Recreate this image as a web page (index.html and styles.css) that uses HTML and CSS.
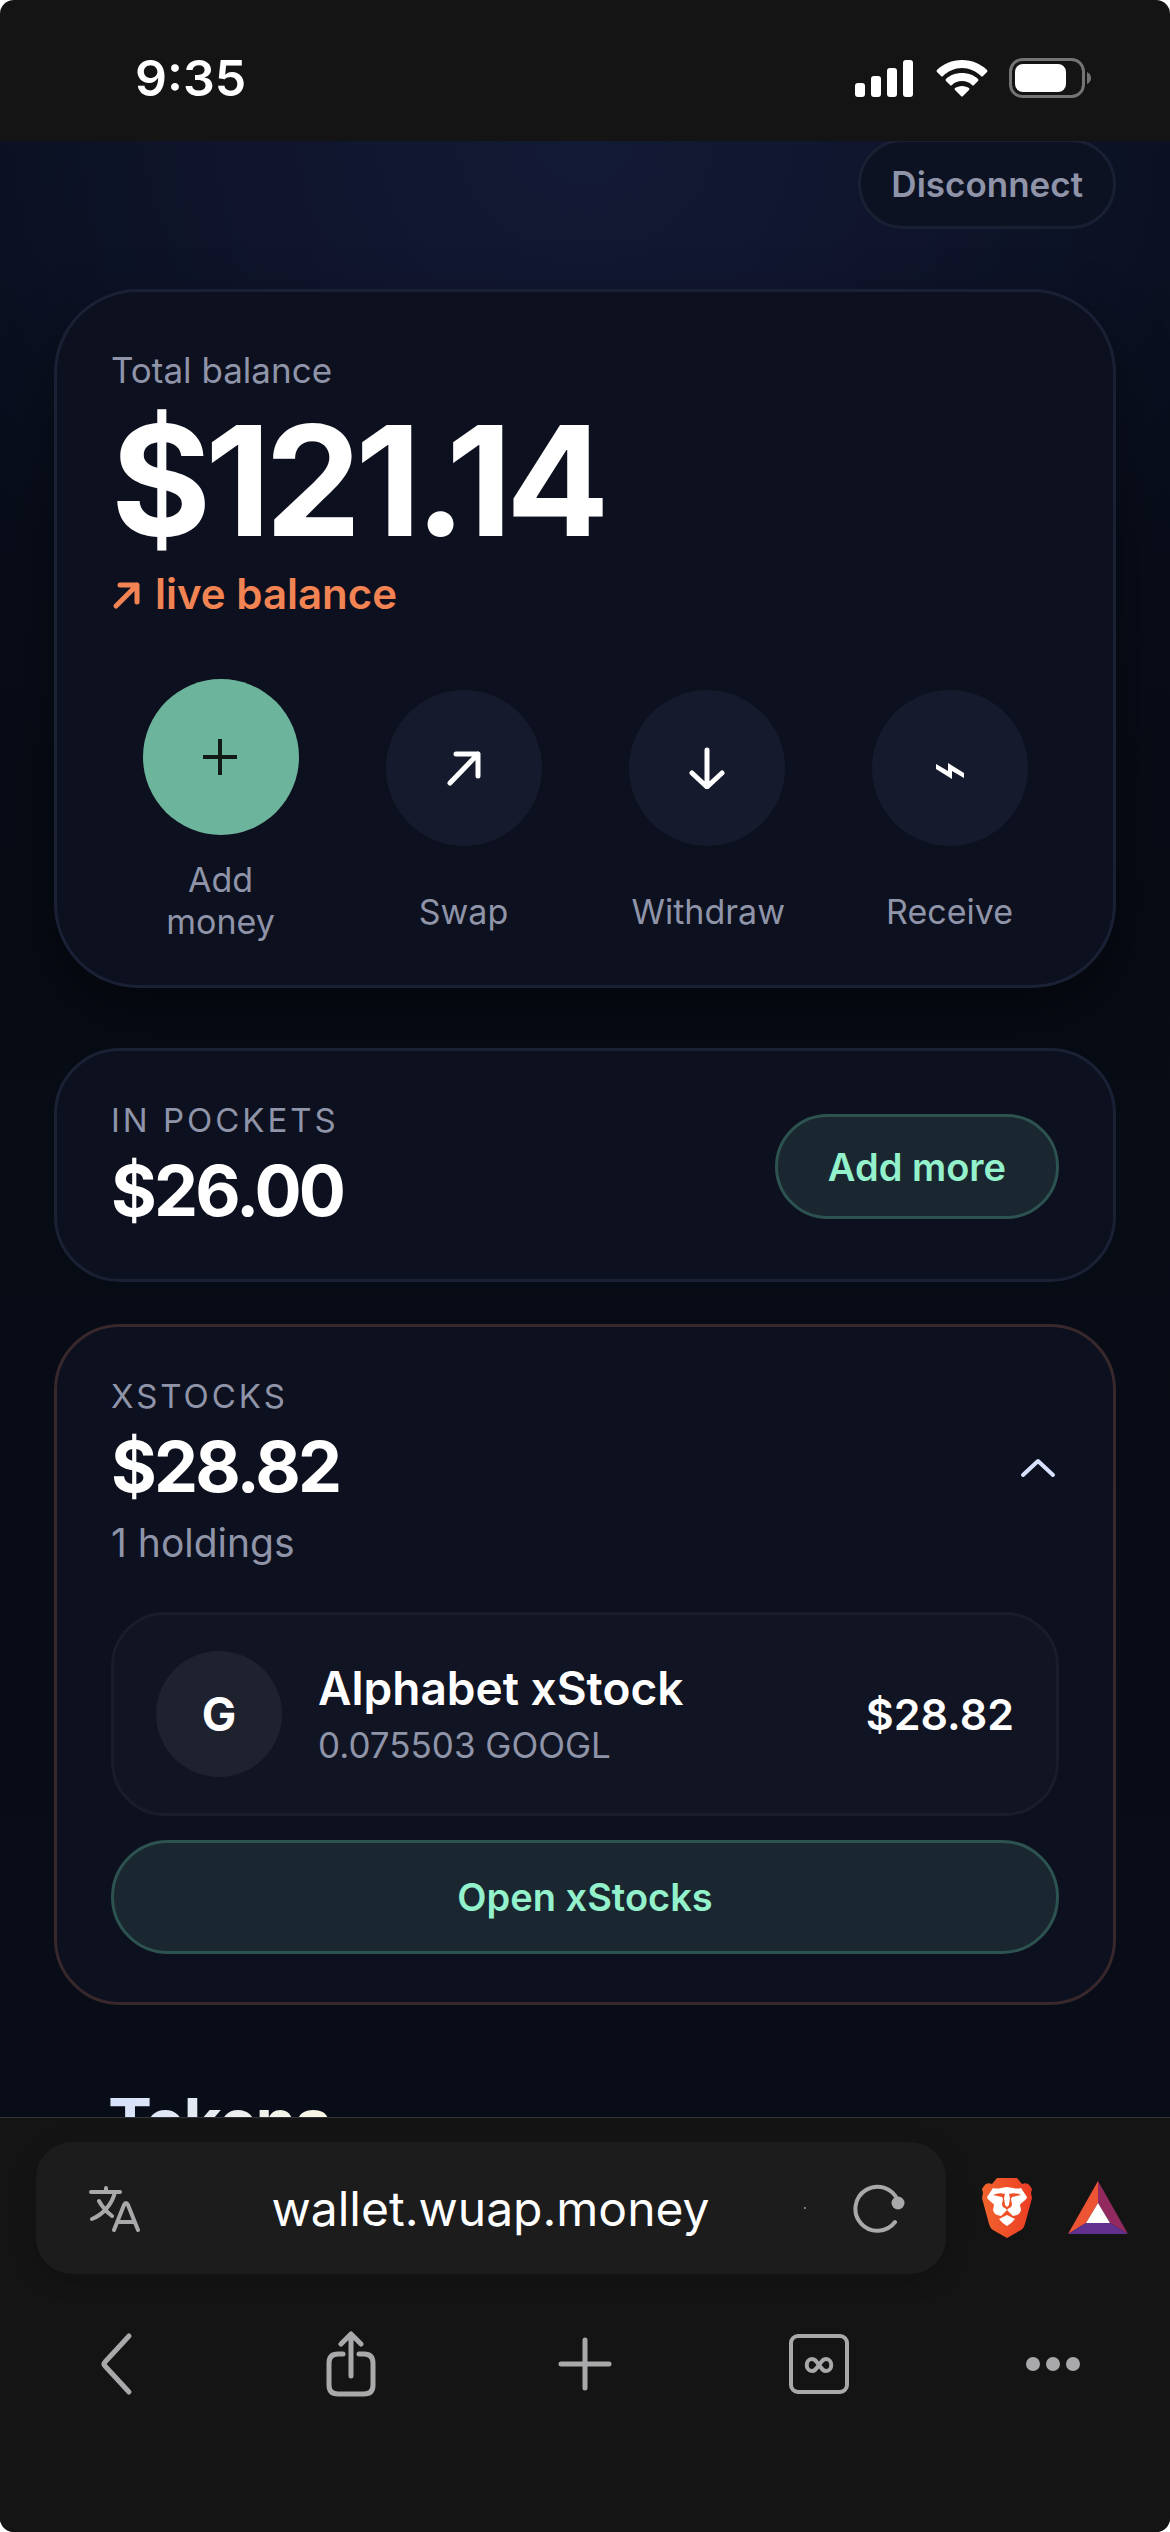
FILE: index.html
```
<!DOCTYPE html>
<html lang="en">
<head>
    <meta charset="UTF-8">
    <meta name="viewport" content="width=device-width, initial-scale=1.0">
    <title>Wuap Wallet</title>
    <link rel="stylesheet" href="styles.css">
</head>
<body>
    <div class="screen">
        <header class="status-bar">
            <span class="time">9:35</span>
            <div class="status-icons">
                <svg width="60" height="38" viewBox="0 0 60 38" fill="#fff">
                    <rect x="0" y="24" width="10" height="14" rx="3"/>
                    <rect x="16" y="17" width="10" height="21" rx="3"/>
                    <rect x="32" y="9" width="10" height="29" rx="3"/>
                    <rect x="48" y="1" width="10" height="37" rx="3"/>
                </svg>
                <svg width="52" height="38" viewBox="0 0 52 38" fill="#fff">
                    <path d="M26 1C16 1 7 5 1 11q-1 1 0 2l4 4q1 1 2 0C12 12 19 9 26 9s14 3 19 8q1 1 2 0l4-4q1-1 0-2C45 5 36 1 26 1z"/>
                    <path d="M26 14c-6 0-12 2-16 6q-1 1 0 2l4 4q1 1 2 0c3-3 6-4 10-4s7 1 10 4q1 1 2 0l4-4q1-1 0-2c-4-4-10-6-16-6z"/>
                    <path d="M26 27c-3 0-5 1-7 2q-1 1 0 2l6 6q1 1 2 0l6-6q1-1 0-2c-2-1-4-2-7-2z"/>
                </svg>
                <svg width="83" height="40" viewBox="0 0 83 40">
                    <rect x="1.500" y="1.500" width="73" height="37" rx="12" fill="none" stroke="#747474" stroke-width="3"/>
                    <rect x="6" y="6" width="51" height="28" rx="8" fill="#fff"/>
                    <path d="M78 14q4 2 4 6t-4 6z" fill="#747474"/>
                </svg>
            </div>
        </header>

        <main class="wallet">
            <div class="topbar">
                <button class="disconnect">Disconnect</button>
            </div>

            <section class="card balance">
                <p class="balance-label">Total balance</p>
                <p class="balance-total">$121.14</p>
                <p class="balance-live">
                    <svg width="32" height="32" viewBox="0 0 32 32" fill="none" stroke="currentColor" stroke-width="5" stroke-linecap="round" stroke-linejoin="round"><path d="M5 28L26 7M9 7h17v17"/></svg>
                    live balance
                </p>
                <div class="actions">
                    <button class="action primary">
                        <span class="action-icon"><svg width="36" height="36" viewBox="0 0 36 36" fill="none" stroke="currentColor" stroke-width="4"><path d="M17 0v36M0 18h34"/></svg></span>
                        <span class="action-label">Add money</span>
                    </button>
                    <button class="action">
                        <span class="action-icon"><svg width="36" height="38" viewBox="0 0 36 38" fill="none" stroke="currentColor" stroke-width="5" stroke-linecap="round" stroke-linejoin="round"><path d="M4 34L32 5M10 5h22v22"/></svg></span>
                        <span class="action-label">Swap</span>
                    </button>
                    <button class="action">
                        <span class="action-icon"><svg width="36" height="42" viewBox="0 0 36 42" fill="none" stroke="currentColor" stroke-width="5" stroke-linecap="round" stroke-linejoin="round"><path d="M18 3v36M3 26l15 14 15-14"/></svg></span>
                        <span class="action-label">Withdraw</span>
                    </button>
                    <button class="action">
                        <span class="action-icon"><svg width="28" height="24" viewBox="0 0 28 24" fill="currentColor"><path d="M0 8l12 7V7l16 10v5l-12-7v8L0 13z"/></svg></span>
                        <span class="action-label">Receive</span>
                    </button>
                </div>
            </section>

            <section class="card pockets">
                <div>
                    <h2 class="card-title">In pockets</h2>
                    <p class="card-amount">$26.00</p>
                </div>
                <button class="mint-button">Add more</button>
            </section>

            <section class="card stocks">
                <div class="stocks-head">
                    <div>
                        <h2 class="card-title">xStocks</h2>
                        <p class="card-amount">$28.82</p>
                        <p class="holdings">1 holdings</p>
                    </div>
                    <button class="collapse" aria-label="Collapse">
                        <svg width="42" height="30" viewBox="0 0 42 30" fill="none" stroke="currentColor" stroke-width="4" stroke-linecap="round" stroke-linejoin="round"><path d="M6 17L21 3l15 14"/></svg>
                    </button>
                </div>
                <div class="holding">
                    <span class="avatar">G</span>
                    <div class="holding-info">
                        <p class="holding-name">Alphabet xStock</p>
                        <p class="holding-units">0.075503 GOOGL</p>
                    </div>
                    <span class="holding-value">$28.82</span>
                </div>
                <button class="mint-button wide">Open xStocks</button>
            </section>

            <h2 class="tokens-title">Tokens</h2>
        </main>

        <footer class="browser">
            <div class="address-row">
                <div class="address-bar">
                    <button class="icon-button" aria-label="Translate">
                        <svg width="54" height="48" viewBox="0 0 54 48" fill="none" stroke="currentColor" stroke-width="4" stroke-linecap="round" stroke-linejoin="round"><path d="M4 8h29M19 4v4M28 8C25 21 15 31 5 35M12 17q5 9 13 15M27 46L37 21q2-4 4 0l10 25M31 38h16"/></svg>
                    </button>
                    <input class="url" type="text" aria-label="Address" value="wallet.wuap.money">
                    <span class="url-dot"></span>
                    <button class="icon-button" aria-label="Reload">
                        <svg width="54" height="50" viewBox="0 0 54 50" fill="none" stroke="currentColor" stroke-width="4" stroke-linecap="round"><path d="M42 39A22 22 0 1 1 45 18"/><circle cx="45" cy="20" r="6.500" fill="currentColor" stroke="none"/></svg>
                    </button>
                </div>
                <button class="icon-button" aria-label="Brave Shields">
                    <svg width="50" height="60" viewBox="0 0 50 60">
                        <defs><linearGradient id="brave"><stop offset="0" stop-color="#f1642d"/><stop offset="1" stop-color="#ec3c24"/></linearGradient></defs>
                        <path fill="url(#brave)" d="M15 0h20l5 6q6-2 8 2l2 3-1 4 1 5-7 26q-1 4-4 6L25 60 11 52q-3-2-4-6L0 20l1-5-1-4 2-3q2-4 8-2z"/>
                        <path fill="#fff" d="M11 10q4 1 8 0l6-1 6 1q4 1 8 0l6 9q0 2-3 4-4 3-4 4l1 5q-1 4-4 5l-4 1-6-6-6 6-4-1q-3-1-4-5l1-5q0-1-4-4-3-2-3-4z"/>
                        <path fill="#fff" d="M25 37l8 4q-3 4-8 7-5-3-8-7z"/>
                        <path fill="#ee5027" d="M11 17q6-3 12-1l-1 4 1 7 2 2 2-2 1-7-1-4q6-2 12 1l-9 2-1 2 1 5q0 3-3 4l-2 2-2-2q-3-1-3-4l1-5-1-2z"/>
                    </svg>
                </button>
                <button class="icon-button" aria-label="Rewards">
                    <svg width="60" height="54" viewBox="0 0 60 54">
                        <path fill="#ec5434" d="M30 0v22L18 42 0 53z"/>
                        <path fill="#922a5f" d="M30 0l30 53-18-11-12-20z"/>
                        <path fill="#62308f" d="M0 53l18-11h24l18 11z"/>
                        <path fill="#fff" d="M30 22l12 20H18z"/>
                    </svg>
                </button>
            </div>
            <nav class="toolbar">
                <button class="icon-button" aria-label="Back">
                    <svg width="60" height="66" viewBox="0 0 60 66" fill="none" stroke="currentColor" stroke-width="5" stroke-linecap="round" stroke-linejoin="round"><path d="M42 5L18 31q-2 2 0 4l24 26"/></svg>
                </button>
                <button class="icon-button" aria-label="Share">
                    <svg width="60" height="66" viewBox="0 0 60 66" fill="none" stroke="currentColor" stroke-width="5" stroke-linecap="round" stroke-linejoin="round"><path d="M22 23h-5q-9 0-9 9v22q0 9 9 9h26q9 0 9-9V32q0-9-9-9h-5M30 45V3M20 13L30 3l10 10"/></svg>
                </button>
                <button class="icon-button" aria-label="New tab">
                    <svg width="60" height="66" viewBox="0 0 60 66" fill="none" stroke="currentColor" stroke-width="5" stroke-linecap="round"><path d="M30 9v48M6 33h48"/></svg>
                </button>
                <button class="icon-button" aria-label="Tabs">
                    <svg width="60" height="66" viewBox="0 0 60 66" fill="none" stroke="currentColor" stroke-width="4"><rect x="2" y="5" width="56" height="56" rx="7"/><path d="M30 34c3-4 4-6 7-6 7 0 7 12 0 12-3 0-4-2-7-6s-4-6-7-6c-7 0-7 12 0 12 3 0 4-2 7-6z"/></svg>
                </button>
                <button class="icon-button" aria-label="Menu">
                    <svg width="60" height="66" viewBox="0 0 60 66" fill="currentColor"><circle cx="10" cy="33" r="7"/><circle cx="30" cy="33" r="7"/><circle cx="50" cy="33" r="7"/></svg>
                </button>
            </nav>
        </footer>
    </div>
</body>
</html>
```
FILE: styles.css
```
* {
    box-sizing: border-box;
}

body {
    margin: 0;
    background: #ffffff;
    font-family: Inter, 'Liberation Sans', sans-serif;
    color: #ffffff;
}

h2,
p {
    margin: 0;
}

button {
    font-family: inherit;
    padding: 0;
    border: none;
    background: none;
    color: inherit;
}

svg {
    display: block;
    flex: none;
}

.screen {
    display: flex;
    flex-direction: column;
    height: 100vh;
    overflow: hidden;
    border-radius: 14px;
    background: #141414;
}

/* Phone status bar */
.status-bar {
    display: flex;
    flex: none;
    justify-content: space-between;
    align-items: center;
    height: 141px;
    padding: 15px 78px 0 135px;
}

.time {
    font-size: 50px;
    font-weight: 600;
    line-height: 60px;
}

.status-icons {
    display: flex;
    align-items: center;
    gap: 21px;
}

/* Wallet page */
.wallet {
    flex: 1;
    min-height: 0;
    overflow: hidden;
    padding: 0 54px;
    background: radial-gradient(ellipse 720px 620px at 50% 0, #131a35 0%, #11162f 35%, rgba(10, 15, 30, 0) 100%), linear-gradient(#090f1e, #070b14 40%, #080d18);
}

.topbar {
    display: flex;
    justify-content: flex-end;
    align-items: flex-end;
    height: 88px;
    margin-bottom: 60px;
}

.disconnect {
    flex: none;
    height: 90px;
    padding: 0 30px;
    border: 3px solid #1a2033;
    border-radius: 45px;
    background: #0d1222;
    color: #8f94a9;
    font-size: 35px;
    font-weight: 600;
}

.card {
    border: 3px solid #1b2135;
    border-radius: 66px;
    background: #0d101e;
}

.balance {
    padding: 54px 54px 42px;
    margin-bottom: 60px;
    border-radius: 84px;
    box-shadow: 0 24px 60px rgba(0, 0, 0, 0.4);
}

.balance-label {
    color: #8f94a9;
    font-size: 35px;
    line-height: 48px;
}

.balance-total {
    font-size: 153px;
    font-weight: 700;
    line-height: 174px;
    letter-spacing: -0.04em;
}

.balance-live {
    display: flex;
    align-items: center;
    gap: 12px;
    color: #f28353;
    font-size: 42px;
    font-weight: 600;
    line-height: 51px;
}

.actions {
    display: grid;
    grid-template-columns: repeat(4, 1fr);
    gap: 24px;
    margin-top: 60px;
}

.action {
    display: grid;
    place-items: center;
    gap: 24px;
}

.action-icon {
    display: grid;
    place-items: center;
    width: 156px;
    height: 156px;
    border-radius: 50%;
    background: #151b2c;
}

.primary .action-icon {
    background: #6cb49c;
    color: #121a16;
}

.action-label {
    max-width: 150px;
    color: #8f94a9;
    font-size: 34px;
    line-height: 42px;
}

.card-title {
    color: #8f94a9;
    font-size: 33px;
    font-weight: 400;
    line-height: 48px;
    letter-spacing: 0.09em;
    text-transform: uppercase;
}

.card-amount {
    font-size: 70px;
    font-weight: 700;
    line-height: 93px;
    letter-spacing: -0.04em;
}

.pockets {
    display: flex;
    justify-content: space-between;
    align-items: center;
    padding: 45px 54px 42px;
    margin-bottom: 42px;
}

.mint-button {
    height: 105px;
    padding: 0 50px;
    border: 3px solid #2d5350;
    border-radius: 57px;
    background: #1a2730;
    color: #93f1cb;
    font-size: 38px;
    font-weight: 600;
}

.wide {
    width: 100%;
    height: 114px;
}

.stocks {
    padding: 45px 54px 48px;
    border-color: #38272b;
}

.stocks-head {
    display: flex;
    justify-content: space-between;
    align-items: center;
    margin-bottom: 39px;
}

.collapse {
    color: #d8e1ff;
}

.holdings {
    color: #8f94a9;
    font-size: 39px;
    line-height: 60px;
}

.holding {
    display: flex;
    align-items: center;
    gap: 36px;
    margin-bottom: 24px;
    padding: 36px 42px;
    border: 3px solid #191d2b;
    border-radius: 54px;
    background: #111422;
}

.avatar {
    display: grid;
    place-items: center;
    flex: none;
    width: 126px;
    height: 126px;
    border-radius: 50%;
    background: #1e212e;
    font-size: 46px;
    font-weight: 700;
}

.holding-info {
    flex: 1;
}

.holding-name {
    font-size: 46px;
    font-weight: 600;
    line-height: 63px;
}

.holding-units {
    color: #8f94a9;
    font-size: 35px;
    line-height: 51px;
}

.holding-value {
    font-size: 43px;
    font-weight: 600;
}

.tokens-title {
    width: fit-content;
    margin: 78px 54px 0;
    background: linear-gradient(120deg, #d4e0fd, #fffbe0);
    background-clip: text;
    color: transparent;
    font-size: 66px;
    font-weight: 700;
    line-height: 78px;
    letter-spacing: -0.03em;
}

/* Browser controls */
.browser {
    flex: none;
    height: 415px;
    border-top: 1px solid #33333a;
    background: #141414;
    color: #a9a9ab;
}

.address-row {
    display: flex;
    align-items: center;
    gap: 36px;
    padding: 24px 42px 0 36px;
}

.icon-button {
    display: grid;
    place-items: center;
    flex: none;
}

.address-bar {
    display: flex;
    align-items: center;
    flex: 1;
    min-width: 0;
    height: 132px;
    padding: 0 39px 0 51px;
    border-radius: 36px;
    background: #1c1c1c;
    box-shadow: 0 6px 24px rgba(0, 0, 0, 0.15);
}

.url {
    flex: 1;
    min-width: 0;
    padding: 0 0 0 36px;
    border: none;
    outline: none;
    background: none;
    color: #ffffff;
    font-family: inherit;
    font-size: 48px;
    text-align: center;
}

.url-dot {
    width: 2px;
    height: 2px;
    margin-right: 47px;
    background: #77777a;
}

.toolbar {
    display: grid;
    grid-template-columns: repeat(5, 1fr);
    margin-top: 57px;
}
```
